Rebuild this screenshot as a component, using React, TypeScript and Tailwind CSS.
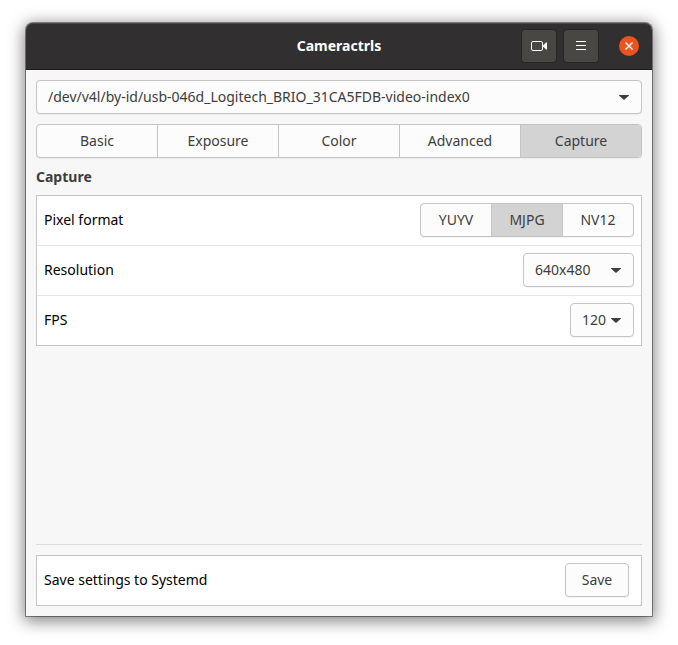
import { useState } from "react";

const tabs = ["Basic", "Exposure", "Color", "Advanced", "Capture"];
const formats = ["YUYV", "MJPG", "NV12"];
const device = "/dev/v4l/by-id/usb-046d_Logitech_BRIO_31CA5FDB-video-index0";

const control = "border border-[#c4c4c4] bg-[#fcfcfc] text-[#3d3d3d]";

type DropdownProps = {
  id: string;
  label?: string;
  options: string[];
  className: string;
};

function Dropdown({ id, label, options, className }: DropdownProps) {
  return (
    <div className={`relative ${className}`}>
      <select
        id={id}
        aria-label={label}
        className={`block h-[34px] w-full appearance-none rounded-[4px] pl-[11px] shadow-[0_1px_1px_#0000000d] ${control}`}
      >
        {options.map((option) => (
          <option key={option}>{option}</option>
        ))}
      </select>
      <svg
        className="pointer-events-none absolute top-[14px] right-3 h-[6px] w-3"
        viewBox="0 0 12 6"
        fill="#3d3d3d"
        aria-hidden="true"
      >
        <path d="M1 1h10v.4L6.6 5.5q-.6.5-1.2 0L1 1.4z" />
      </svg>
    </div>
  );
}

type SegmentsProps = {
  items: string[];
  initial: string;
  label: string;
  className?: string;
};

function Segments({ items, initial, label, className = "" }: SegmentsProps) {
  const [active, setActive] = useState(initial);
  return (
    <div
      role="group"
      aria-label={label}
      className={`flex h-[34px] overflow-hidden rounded-[4px] shadow-[0_1px_1px_#0000000d] ${control} ${className}`}
    >
      {items.map((item) => (
        <button
          key={item}
          type="button"
          aria-pressed={item === active}
          onClick={() => setActive(item)}
          className={`flex-1 border-l border-[#c4c4c4] first:border-l-0 ${
            item === active ? "bg-[#d3d3d3]" : ""
          }`}
        >
          {item}
        </button>
      ))}
    </div>
  );
}

const row = "flex items-center justify-between px-[7px] pt-[7px] pb-2";
const headerButton =
  "flex h-8 w-[34px] items-center justify-center rounded-[3px] bg-[#484744] shadow-[0_0_0_1px_#282626]";

export default function App() {
  return (
    <div className="flex min-h-screen bg-white px-[26px] pt-[23px] pb-[29px] font-['Noto_Sans',sans-serif] text-[14px] leading-5 text-black">
      <div className="flex min-w-0 flex-1 flex-col rounded-t-[7px] bg-[#f7f7f7] shadow-[0_0_0_1px_#00000066,0_3px_16px_2px_#00000080]">
        <header className="grid h-[47px] grid-cols-[1fr_auto_1fr] items-center rounded-t-[7px] border-b border-[#1c1a1a] bg-[#322f30] shadow-[inset_0_1px_0_#4b4849]">
          <h1 className="col-start-2 font-bold text-white">Cameractrls</h1>
          <div className="flex items-center justify-end gap-2 pr-[13px]">
            <button type="button" aria-label="Open camera preview" className={headerButton}>
              <svg width="18" height="12" viewBox="0 0 18 12" fill="none" aria-hidden="true">
                <rect x="1.5" y="1.5" width="11" height="9" rx="1.5" stroke="#fff" />
                <path d="M12.5 6 16 2.5h1v7h-1z" fill="#fff" />
              </svg>
            </button>
            <button type="button" aria-label="Menu" className={headerButton}>
              <svg width="12" height="12" viewBox="0 0 12 12" stroke="#fff" aria-hidden="true">
                <path d="M1 1.5h10M1 5.5h10M1 9.5h10" />
              </svg>
            </button>
            <button
              type="button"
              aria-label="Close"
              className="ml-[13px] flex size-5 items-center justify-center rounded-full bg-[#e95420]"
            >
              <svg width="8" height="8" viewBox="0 0 8 8" stroke="#fff" strokeWidth="1.4" aria-hidden="true">
                <path d="m.5.5 7 7m0-7-7 7" />
              </svg>
            </button>
          </div>
        </header>

        <main className="flex flex-1 flex-col p-2.5">
          <Dropdown id="device" label="Device" options={[device]} className="w-full" />
          <Segments items={tabs} initial="Capture" label="Settings page" className="mt-2.5" />

          <h2 className="mt-[9px] font-bold text-[#3d3d3d]">Capture</h2>
          <section className="mt-2 divide-y divide-[#e4e4e4] border border-[#c4c4c4] bg-white">
            <div className={row}>
              <span>Pixel format</span>
              <Segments items={formats} initial="MJPG" label="Pixel format" className="w-[214px]" />
            </div>
            <div className={row}>
              <label htmlFor="resolution">Resolution</label>
              <Dropdown id="resolution" options={["640x480"]} className="w-[111px]" />
            </div>
            <div className={row}>
              <label htmlFor="fps">FPS</label>
              <Dropdown id="fps" options={["120"]} className="w-16" />
            </div>
          </section>

          <footer className="mt-auto border-t border-[#dcdcdc] pt-2.5">
            <div className="flex items-center justify-between border border-[#c4c4c4] bg-white pt-[7px] pr-3 pb-2 pl-[7px]">
              <span>Save settings to Systemd</span>
              <button
                type="button"
                className={`h-[34px] w-16 rounded-[4px] shadow-[0_1px_1px_#0000000d] ${control}`}
              >
                Save
              </button>
            </div>
          </footer>
        </main>
      </div>
    </div>
  );
}
